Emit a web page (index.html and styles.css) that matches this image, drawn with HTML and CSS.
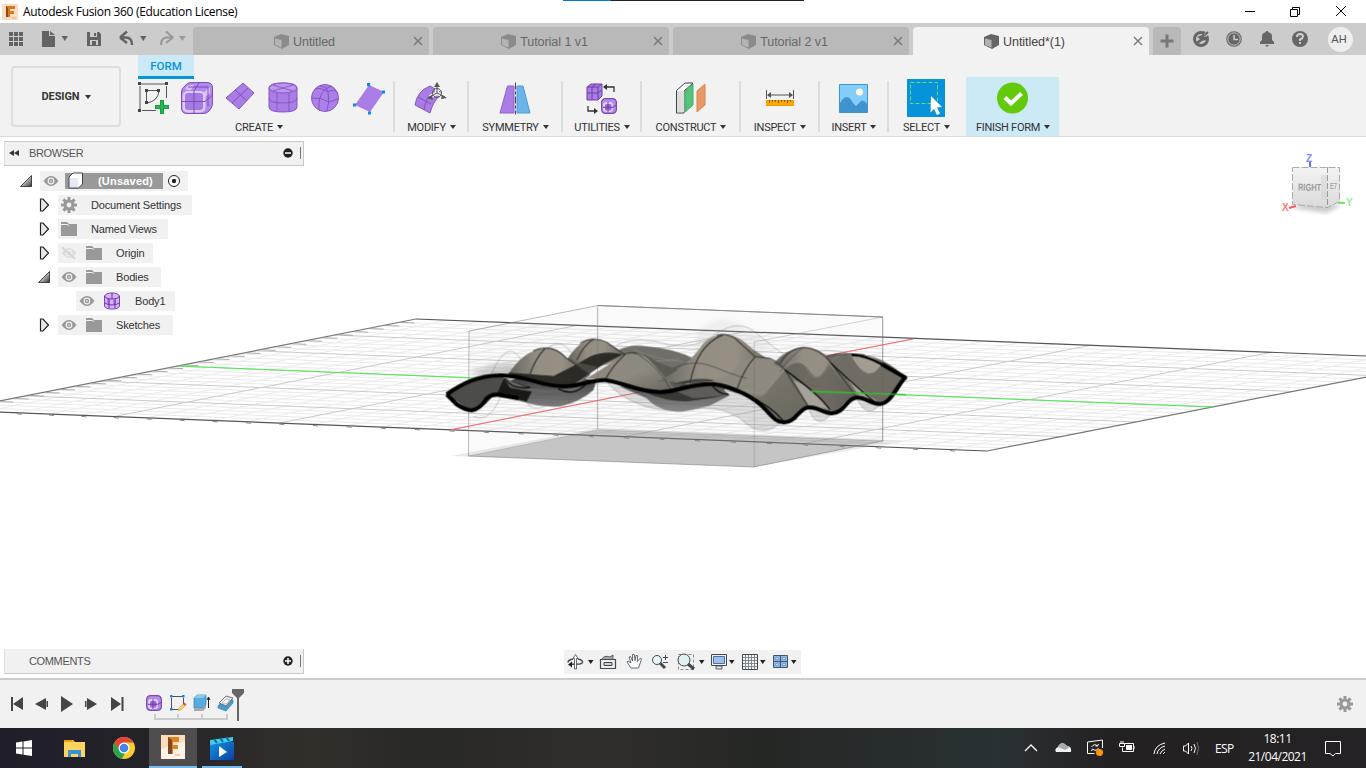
FILE: index.html
```html
<!DOCTYPE html>
<html lang="en">
<head>
<meta charset="utf-8">
<title>Autodesk Fusion 360 (Education License)</title>
<link rel="stylesheet" href="styles.css">
</head>
<body>
<svg class="defs" width="0" height="0">
  <defs>
    <linearGradient id="gTri" x1="0" y1="0" x2="1" y2="1"><stop offset=".3" stop-color="#eee"/><stop offset="1" stop-color="#333"/></linearGradient>
    <linearGradient id="gClay" x1="0" y1="0" x2="1" y2="1"><stop offset="0" stop-color="#8d887d"/><stop offset=".5" stop-color="#8f8a7f"/><stop offset="1" stop-color="#625f58"/></linearGradient>
    <linearGradient id="gHill" x1="0" y1="0" x2="1" y2="0"><stop offset="0" stop-color="#66635d"/><stop offset=".35" stop-color="#938d82"/><stop offset=".65" stop-color="#969085"/><stop offset="1" stop-color="#6b6861"/></linearGradient>
    <linearGradient id="gUnder" x1="0" y1="0" x2="0" y2="1"><stop offset="0" stop-color="#222"/><stop offset="1" stop-color="#6f6f6f"/></linearGradient>
    <linearGradient id="gCube" x1="0" y1="0" x2="0" y2="1"><stop offset="0" stop-color="#f3f3f3"/><stop offset="1" stop-color="#dadada"/></linearGradient>
    <linearGradient id="gPlay" x1="0" y1="0" x2="1" y2="1"><stop offset="0" stop-color="#1593df"/><stop offset="1" stop-color="#0b3fa5"/></linearGradient>
    <filter id="soft" x="-20%" y="-30%" width="140%" height="160%"><feGaussianBlur stdDeviation="8"/></filter>
    <filter id="soft2"><feGaussianBlur stdDeviation="2"/></filter>
  </defs>
  <symbol id="cube" viewBox="0 0 18 18"><path d="M1 4 8 1l8 2v9l-7 4-8-4z" fill="#666"/><path d="M2 5.500 8.500 7v7.800L2 11.800z" fill="#b0b0b0"/></symbol>
  <symbol id="x" viewBox="0 0 10 10"><path d="m1 1 8 8M9 1 1 9" stroke="#777" stroke-width="1.400" fill="none"/></symbol>
  <symbol id="down" viewBox="0 0 6 4"><path d="M0 0h6L3 4z" fill="currentColor"/></symbol>
  <symbol id="closed" viewBox="0 0 12 16"><path d="M2.500 2v12H5l5.500-6L5 2z" fill="#e8e8e8" stroke="#222" stroke-width="1.200"/></symbol>
  <symbol id="open" viewBox="0 0 12 12"><path d="M11.500.5v11H.5z" fill="url(#gTri)" stroke="#222" stroke-width=".8"/></symbol>
  <symbol id="eye" viewBox="0 0 16 12"><path d="M.5 6Q8-4 15.500 6 8 16 .5 6" fill="#999"/><circle cx="8" cy="6" r="3.400" fill="#f1f1f1"/><circle cx="8" cy="6" r="2.200" fill="#999"/><circle cx="8" cy="6" r=".8" fill="#fff"/></symbol>
  <symbol id="folder" viewBox="0 0 16 14"><path d="M0 0h6l2 2h8v12H0z" fill="#999"/><path d="M0 2.500h6.500L8 3.600" stroke="#f1f1f1" fill="none"/></symbol>
  <symbol id="gear" viewBox="0 0 16 16"><path d="M8 0v16M0 8h16M2.400 2.400l11.200 11.200M13.600 2.400 2.400 13.600" stroke="#999" stroke-width="3"/><circle cx="8" cy="8" r="5.500" fill="#999"/><circle cx="8" cy="8" r="2.400" fill="#f1f1f1"/></symbol>
  <symbol id="rbox" viewBox="0 0 32 32"><path d="M4 4Q6 .5 10 .5H26Q31.500.5 31.500 6V22Q31 26 28 29 26 31.500 22 31.500H6Q.5 31.500.5 26V10Q.5 6 4 4z" fill="#b388ee" stroke="#7b50b8"/><path d="M4 7Q6 3 10 3h3l-3 5H6zM23 10l6-5v6l-6 5z" fill="#d9c0f8"/><rect x="1.500" y="9" width="23" height="21.500" rx="5" fill="#dfc9fa"/><rect x="4" y="11" width="18" height="17" rx="3" fill="#a779e4"/><path d="M1 19.500h23l7-6M13 31V9l5-8M7 5h20v19" stroke="#7548ad" stroke-width=".9" fill="none"/></symbol>
  <symbol id="rboxs" viewBox="0 0 16 16"><rect x=".6" y=".6" width="14.800" height="14.800" rx="4" fill="#b48aec" stroke="#7b4cb8" stroke-width="1.200"/><rect x="2" y="4" width="10" height="10" rx="3" fill="#e3d0fb"/><rect x="4" y="6" width="6.500" height="6.500" rx="1.500" fill="#9a68d8"/><path d="M7 4v10M2 9.300h10l3-2" stroke="#6c3fa5" fill="none"/></symbol>
</svg>

<div class="app">
  <header class="titlebar">
    <svg width="16" height="16" viewBox="0 0 16 16"><path d="M0 0h16v16H0z" fill="#fbdcc3"/><path d="M4 2h9v3H8v2h4v3H8v3H4z" fill="#d87a1d"/><path d="M4 2 6 4v9H4z" fill="#8c4a14"/><path d="M10 14h4" stroke="#f0a76a"/></svg>
    <span class="title">Autodesk Fusion 360 (Education License)</span>
    <svg class="winbtns" width="101" height="12" viewBox="0 0 101 12" fill="none" stroke="#000"><path d="M0 5.500h10"/><path d="M45.500 3.500h7v7h-7zM47.500 3V1.500h7v7H53"/><path d="m91 0 10 10M101 0 91 10"/></svg>
    <i class="topline"></i>
  </header>

  <nav class="tabbar">
    <div class="quick">
      <svg width="193" height="32" viewBox="0 0 193 32" fill="#636363"><path d="M9 9h4v4H9zm5 0h4v4h-4zm5 0h4v4h-4zM9 14h4v4H9zm5 0h4v4h-4zm5 0h4v4h-4zM9 19h4v4H9zm5 0h4v4h-4zm5 0h4v4h-4z"/><path d="M42 8h7v5h6v11H42zM50 8l5 4h-5z"/><path d="M61.500 13h6.500l-3.200 5z"/><path d="M87 9h12l2 2v12H87z"/><path d="M90 9h7v5h-7zM90 17h8v5h-8z" fill="#ccc"/><path d="M94 10h2v3h-2zM92 18h4v4h-4z"/><path d="m120 14.500 7-6M120 14.500l7 5.500M121 14.500h5q6 0 6 7.500" fill="none" stroke="#636363" stroke-width="2.400"/><path d="M140 13h6.500l-3.200 5z"/><g fill="#999"><path d="m173 14.500-7-6M173 14.500l-7 5.500M172 14.500h-5q-6 0-6 7.500" fill="none" stroke="#999" stroke-width="2.200"/><path d="M179 13h6.500l-3.200 5z"/></g></svg>
    </div>
    <div class="tab dim"><svg class="cube"><use href="#cube"/></svg><span>Untitled</span><svg class="close"><use href="#x"/></svg></div>
    <div class="tab dim"><svg class="cube"><use href="#cube"/></svg><span>Tutorial 1 v1</span><svg class="close"><use href="#x"/></svg></div>
    <div class="tab dim"><svg class="cube"><use href="#cube"/></svg><span>Tutorial 2 v1</span><svg class="close"><use href="#x"/></svg></div>
    <div class="tab active"><svg class="cube"><use href="#cube"/></svg><span>Untitled*(1)</span><svg class="close"><use href="#x"/></svg></div>
    <div class="plus"><svg width="14" height="14"><path d="M7 .5v13M.5 7h13" stroke="#777" stroke-width="3"/></svg></div>
    <svg class="status" width="130" height="32" viewBox="0 0 130 32" fill="#666"><circle cx="12" cy="16" r="6.500" fill="none" stroke="#666" stroke-width="3"/><path d="m6 20 5-4-3-2 5-2 2-4 3 3-3 3 4-1-2 4-4 1-5 4z"/><path d="m15 11 4-4 2 3-4 4z" fill="#ccc"/><path d="m16 12 3-3" stroke="#666" stroke-width="2"/><circle cx="45" cy="16" r="7.800"/><circle cx="45" cy="16" r="6.200" fill="none" stroke="#ccc" stroke-width=".9"/><path d="M45 12v4.500h4" stroke="#ccc" stroke-width="1.500" fill="none"/><path d="M71 21v-2l2-2v-4q0-3 4-4V8h2v1q4 1 4 4v4l2 2v2zM76 22h4l-2 2z"/><circle cx="111" cy="16" r="8"/><path d="M108 14q0-3 3-3 3 .2 3 2.500 0 1.500-3 3v1.500M111 19v2" stroke="#ccc" stroke-width="2" fill="none"/></svg>
    <div class="avatar">AH</div>
  </nav>

  <section class="ribbon">
    <div class="design"><b>DESIGN</b><svg class="dn"><use href="#down"/></svg></div>
    <div class="create">
      <div class="formtab">FORM</div>
      <div class="createicons">
        <svg width="36" height="34" viewBox="0 0 36 34"><path d="M4 3h26M3 5v24M29.500 5v12M5 29.500h14" stroke="#555" fill="none"/><path d="M10 9.500h11M9.500 11v9M22 10q-1 10-12 12" stroke="#555" fill="none"/><path d="M1 1h3v3H1zM28 1h3v3h-3zM1 28h3v3H1zM8 8h3v3H8zM20 8h3v3h-3zM8 20h3v3H8z" fill="#444"/><path d="M18 26h14M25 19v14" stroke="#1a9e44" stroke-width="4"/><path d="M19 26h12M25 20v12" stroke="#27b555" stroke-width="2"/></svg>
        <svg width="32" height="32"><use href="#rbox"/></svg>
        <svg width="30" height="32" viewBox="0 0 30 32"><path d="M18 1 29 11 14 27 1 16z" fill="#a97ce6" stroke="#8658c4"/><path d="m10 8 12 11M23 6 7 21" stroke="#7f52bb"/></svg>
        <svg width="30" height="32" viewBox="0 0 30 32"><path d="M1 6v19q0 5 14 5t14-5V6q0-5-14-5T1 6z" fill="#a97ce6" stroke="#8658c4"/><ellipse cx="15" cy="6" rx="14" ry="5" fill="#bd96f0" stroke="#8658c4"/><path d="M1 16q0 5 14 5t14-5M9 11v19M21 11v19M5 3l20 6M25 3 5 9" stroke="#7f52bb" fill="none" stroke-width=".8"/></svg>
        <svg width="30" height="32" viewBox="0 0 30 32"><circle cx="14" cy="16" r="13.500" fill="#ad80e9" stroke="#8658c4"/><path d="M4 7q6-2 13 3 6-4 10 1M17 10q2 9-1 19M1 16q9-1 17 4l9-3M9 4q8 1 8 6M21 4q-6 2-8 4-6 7-5 20" stroke="#7f52bb" fill="none" stroke-width=".9"/></svg>
        <svg width="34" height="34" viewBox="0 0 34 34"><path d="M15 3 30 10 16 30 1 23z" fill="#a97ce6"/><path d="M13 1h3.200v3.200H13zM28 8.500h3v3h-3zM14 29.500h3v3h-3zM-1 21.500h3v3h-3z" fill="#0b8be8"/></svg>
      </div>
      <div class="label createlabel">CREATE<svg class="dn"><use href="#down"/></svg></div>
    </div>
    <div class="group">
      <svg width="34" height="36" viewBox="0 0 34 36"><path d="M1 24Q3 10 16 5l12 7q-9 8-12 20z" fill="#a97ce6" stroke="#8658c4"/><path d="m4 16 13 7M10 29q1-13 12-19" stroke="#7f52bb" fill="none"/><path d="M23 3v9m0 0-7 4m7-4 8 4" stroke="#f1f1f1" stroke-width="4"/><circle cx="23" cy="12" r="4.500" fill="none" stroke="#555"/><path d="M23 3v9m0 0-7 4m7-4 8 4" stroke="#555" fill="none"/><path d="m23 1-3 5h6zM13 17l5-3 1 5zM33 17l-5-3-1 4z" fill="#555"/></svg>
      <div class="label">MODIFY<svg class="dn"><use href="#down"/></svg></div></div>
    <div class="group">
      <svg width="34" height="36" viewBox="0 0 34 36"><path d="M9.500 5H16v27H2z" fill="#a97ce6" stroke="#915fd0"/><path d="M19 5h6l7 27H19z" fill="#6bb3e8" stroke="#4d9bd6"/><path d="M17.500 1.500v32" stroke="#444" stroke-dasharray="7 2 3 2"/></svg>
      <div class="label">SYMMETRY<svg class="dn"><use href="#down"/></svg></div></div>
    <div class="group">
      <svg width="34" height="36" viewBox="0 0 34 36"><path d="m2 6 4-3h11v12l-4 4H2z" fill="#a97ce6" stroke="#6c3fa5"/><path d="M2 6h11v12M2 12h11l4-3M7 19V6l4-3M13 6l4-3" stroke="#6c3fa5" fill="none"/><svg x="16" y="17" width="16" height="16"><use href="#rboxs"/></svg><path d="M29 11V6h-8M3 25v5h8" stroke="#333" stroke-width="1.300" fill="none"/><path d="m18 6 4-3v6zM13 30l-4-3v6z" fill="#333"/></svg>
      <div class="label">UTILITIES<svg class="dn"><use href="#down"/></svg></div></div>
    <div class="group">
      <svg width="34" height="36" viewBox="0 0 34 36"><path d="M2.500 9.500 11 2h8l-9 8v22H2.500z" fill="#fff" stroke="#444"/><path d="M3 10h7v21H3z" fill="#ddd"/><path d="m11 10 8-7v21l-8 7z" fill="#55c47a" stroke="#3cad62"/><path d="m23 10 8-7v21l-8 7z" fill="#e79864" stroke="#d88550"/></svg>
      <div class="label">CONSTRUCT<svg class="dn"><use href="#down"/></svg></div></div>
    <div class="group">
      <svg width="34" height="36" viewBox="0 0 34 36"><path d="M3.500 9v9M30.500 9v9M5 14h24" stroke="#555"/><path d="m4 14 4-3v6zM30 14l-4-3v6z" fill="#555"/><path d="M3.500 19.500h27v5h-27z" fill="#fba900" stroke="#f09c00"/><path d="M6.500 19v3m3-3v2m3-2v2m3-2v3m3-3v2m3-2v2m3-2v3m3-3v2" stroke="#7a5200" stroke-width=".9"/></svg>
      <div class="label">INSPECT<svg class="dn"><use href="#down"/></svg></div></div>
    <div class="group">
      <svg width="34" height="36" viewBox="0 0 34 36"><path d="M2.500 3.500h28v28h-28z" fill="#83cdfd" stroke="#3f93ce"/><path d="M3 22q7-12 13 0l3 3 5-5q3-2 6 3v8H3z" fill="#3f93ce"/><circle cx="22.500" cy="11" r="3.500" fill="#fffbd5"/></svg>
      <div class="label">INSERT<svg class="dn"><use href="#down"/></svg></div></div>
    <div class="group select">
      <svg width="38" height="38" viewBox="0 0 38 38"><path d="M0 0h38v38H0z" fill="#0793da"/><path d="M3.500 3.500h27v21h-27z" fill="none" stroke="#69db7b" stroke-dasharray="4 2"/><path d="m24 17 11 11-5 .5 3 6-3 1.500-3-6-3.500 3.500z" fill="#fff"/></svg>
      <div class="label">SELECT<svg class="dn"><use href="#down"/></svg></div></div>
    <div class="group finish">
      <svg width="34" height="36" viewBox="0 0 34 36"><circle cx="16.500" cy="17" r="15.500" fill="#62ca0a"/><path d="m9 16.500 6 6L25.500 12.500" stroke="#fff" stroke-width="4" fill="none"/></svg>
      <div class="label">FINISH FORM<svg class="dn"><use href="#down"/></svg></div></div>
  </section>

  <main class="viewport">
    <svg class="scene" width="1366" height="541" viewBox="0 137 1366 541">
      <g id="grid"></g>
      <path d="M451 456 598 428 903 441 754 467z" fill="#777" opacity=".16"/>
      <path d="M469 456 598 430 883 441 754 467z" fill="#777" opacity=".3"/>
      <g fill="#bbb" fill-opacity=".08" stroke="#777" stroke-opacity=".5"><path d="M469 331 598 305.500 882.500 317v124l-129 26-285-11z"/><path d="M597.500 305v125L469 456M598 430l285 11M883 317l-129 25" fill="none" stroke-opacity=".3"/></g>
      <path d="M598 305.500 883 317" stroke="#888" fill="none"/>
      <path d="M178 366 500 379M830 392l382 15" stroke="#49ee49"/><path d="M450 430 640 392M825 356l88-17" stroke="#fa6a6a"/>

      <!-- Clay form; one unit is a third of a pixel -->
      <g transform="translate(430 295) scale(.33333)" fill="none" stroke-linejoin="round">
        <g filter="url(#soft)">
          <path d="M120 235Q190 200 260 205L240 265Z" fill="#777" opacity=".35"/>
          <path d="M800 115Q870 40 950 100L1030 150 920 220 790 180Z" fill="#999" opacity=".12"/>
        </g>
        <path d="M130 365Q175 385 210 310T300 335Q350 360 430 250M185 235Q235 120 280 205T340 180Q380 110 430 180M560 150Q620 120 720 150 800 165 860 115 930 70 980 115T1080 190M1110 180Q1190 150 1290 185" stroke="#777" stroke-width="3" opacity=".4"/>
        <path d="M525 255Q570 310 640 332 690 350 780 345 860 325 930 370 1000 440 1060 375L1135 340Q1160 410 1205 355L1280 310Q1310 375 1350 328L1290 280 900 250Z" fill="#999" fill-opacity=".3" stroke="#888" stroke-opacity=".5" stroke-width="3"/>
        <path d="M205 270 260 315Q340 340 395 333 450 320 490 285L500 255 300 235Z" fill="url(#gUnder)" fill-opacity=".9"/>
        <path d="M570 275 650 310Q690 353 760 350L840 332 900 300 850 262 690 275Z" fill="url(#gUnder)" fill-opacity=".75"/>
        <path d="M640 290Q720 325 780 318 850 310 880 302L840 262 690 275Z" fill="#2e2e2c" fill-opacity=".85"/>
        <path d="M740 290Q780 265 850 267L885 275 880 302 790 310Z" fill="#5d5c58"/>
        <path d="M50 298Q130 240 215 240L230 260 260 310Q210 295 190 300 160 345 118 346Z" fill="#4c4c48"/>
        <path d="M222 250 310 280 290 320 200 298Z" fill="#191918"/>
        <path d="M220 248Q330 300 400 282L460 275 430 290Q330 300 240 278Z" fill="#656562"/>

        <path d="M560 168Q600 145 650 154 730 160 790 190L900 215 860 255 690 240Z" fill="#716e67"/>
        <path d="M585 170Q660 215 750 190M610 162Q680 195 760 200" stroke="#aaa" stroke-width="2" opacity=".5"/>
        <path d="M410 195Q450 132 490 132 535 135 585 180L540 205 430 240Z" fill="url(#gHill)"/>
        <path d="M233 240Q280 165 345 160 375 155 410 190L480 240 435 278Q330 280 233 240Z" fill="url(#gHill)"/>
        <path d="M233 233Q330 240 370 243 430 215 480 185 525 165 578 178L520 208 465 245 420 275 340 272 270 250Z" fill="#24241f" fill-opacity=".92"/>
        <path d="M410 186Q440 215 478 240L500 215 455 205Z" fill="#5c5953" fill-opacity=".6"/>
        <path d="M470 250Q530 215 580 178 630 165 680 210L765 290 690 293 520 255Z" fill="url(#gClay)"/>
        <path d="M640 175Q715 230 830 235L770 265 735 280Z" fill="#57544d" opacity=".8"/>
        <path d="M680 260Q770 220 820 145 850 115 890 118 925 120 965 160L1040 210 1040 285 920 280 840 260Z" fill="url(#gHill)"/>
        <path d="M730 267Q800 245 850 255L930 275 975 300 920 295 835 266Z" fill="#242421" opacity=".7"/>
        <path d="M820 262Q900 255 930 205 965 178 1000 187 1040 195 1065 225L1145 340Q1115 335 1100 372 1060 400 1020 350 950 280 850 267Z" fill="url(#gClay)"/>
        <path d="M1030 205Q1070 160 1120 157 1165 155 1205 195L1280 308Q1240 315 1225 350 1200 365 1180 340L1135 335 1065 225Z" fill="url(#gHill)"/>
        <path d="M1185 185Q1240 170 1305 180 1370 190 1428 248 1390 325 1350 328L1280 305 1230 245Z" fill="#716c63"/>
        <path d="M930 275Q990 330 1015 285L1065 225 1130 300 1144 338Q1115 340 1100 368 1070 395 1040 370Z" fill="#6d695f" opacity=".7"/>
        <path d="M1065 225Q1110 180 1140 230 1165 270 1195 205L1275 305Q1245 315 1230 345 1205 370 1180 340Z" fill="#5f5b53" opacity=".72"/>
        <path d="M1265 185Q1290 230 1315 235 1340 235 1355 205L1320 182Z" fill="#a39c90"/>
        <path d="M1090 255Q1150 275 1205 350L1180 338 1135 330ZM1245 240Q1290 280 1350 326L1290 307Z" fill="#a5a29c"/>

        <path d="M295 250Q315 190 345 160M440 195Q465 145 490 133M525 255Q545 215 585 178M780 265Q800 150 880 119M922 280Q940 225 975 185" stroke="#292927" stroke-width="3.500" opacity=".85"/>
        <path d="M620 175Q690 220 725 288M730 220Q790 190 850 215T950 250M1050 230Q1080 185 1120 157" stroke="#292927" stroke-width="3" opacity=".5"/>
        <path d="M345 160Q375 155 410 190L478 238M310 168Q330 158 345 160M450 145Q490 122 530 142L585 180M580 178Q600 170 620 175M860 122Q885 112 915 130L975 185 1020 190Q1050 205 1065 225L1135 335M1050 205Q1080 155 1130 158 1180 165 1215 220L1278 304M1190 185Q1230 170 1305 180" stroke="#33322f" stroke-width="4" opacity=".8"/>
        <path d="M1065 225Q1170 300 1200 345M1200 202Q1245 245 1340 326M225 250Q245 285 300 277M385 282Q430 305 465 270M950 300Q1020 330 1060 378M845 270Q865 298 895 298" stroke="#111" stroke-width="4"/>
        <path d="M870 275Q910 295 955 285 1010 315 1040 235 1110 165 1135 230 1165 275 1200 205 1250 145 1280 205 1315 265 1355 207" stroke="#aaa" stroke-width="2" opacity=".45"/>
        <path d="M50 298C90 270 140 240 215 241S330 274 400 274C450 275 485 253 525 255S625 292 690 291C750 290 780 265 850 267 920 275 980 315 1005 342S1040 382 1060 382C1095 385 1110 337 1135 337 1165 335 1180 355 1205 355 1245 355 1250 308 1280 308 1305 305 1320 327 1350 327 1385 325 1400 270 1426 248L1355 207M50 298 80 328Q105 345 125 346 150 343 170 310 190 293 215 301L265 310" stroke="#000" stroke-width="12"/>
        <path d="M1360 210Q1305 180 1265 180" stroke="#000" stroke-width="7"/>
        <path d="M117 36v0M503 36v365M1359 66v375M973 140v378" stroke="#555" stroke-width="3" opacity=".25"/>
        <path d="M1140 289 1428 299" stroke="#28c928" stroke-width="4"/>
      </g>

      <!-- View cube -->
      <path d="m1290 208 20-6 32 3-15 8z" fill="#999" opacity=".5" filter="url(#soft2)"/>
      <path d="M1310 162v5" stroke="#6668ff" stroke-width="2"/><path d="m1289 208 7-2" stroke="#f55" stroke-width="2"/><path d="M1338 203h7" stroke="#6de66d" stroke-width="2"/>
      <path d="M1292.500 167.500h47v34l-12 6-35-3z" fill="url(#gCube)" stroke="#aaa" stroke-dasharray="7 2"/><path d="M1327.500 167v41" stroke="#999" stroke-dasharray="6 2"/><path d="M1321 175h6v25h-6z" fill="#ccc" opacity=".4"/>
      <g font-family="Liberation Sans, sans-serif" font-weight="bold"><text x="1298" y="190.500" font-size="10" textLength="23" lengthAdjust="spacingAndGlyphs" fill="#999" transform="rotate(1 1298 191)">RIGHT</text><text x="1330" y="189" font-size="9" fill="#aaa" textLength="7" lengthAdjust="spacingAndGlyphs">E7</text><text x="1306" y="162" font-size="10" fill="#8484ff">Z</text><text x="1282" y="211" font-size="10" fill="#ff7777">X</text><text x="1346" y="206" font-size="10" fill="#8df08d">Y</text></g>
    </svg>

    <aside class="browser">
      <div class="panelhead"><svg width="12" height="8"><path d="M5 1v6L0 4zM10 1v6L5 4z" fill="#333"/></svg><span>BROWSER</span><svg class="knob" width="18" height="12"><circle cx="5" cy="6" r="4.700" fill="#222"/><path d="M2 6h6" stroke="#fff" stroke-width="1.500"/><path d="M17.500 0v12" stroke="#777"/></svg></div>
      <div class="row r0"><svg class="arr op"><use href="#open"/></svg><div class="item" style="width:148px"><svg class="eye"><use href="#eye"/></svg><span class="unsaved"><svg width="18" height="18" viewBox="0 0 18 18"><path d="m2 5 4-4h9.500v11l-4 4H2z" fill="#fff" stroke="#444"/><path d="M3 6h8v9H3z" fill="#e4eaf4"/></svg><b>(Unsaved)</b></span><svg class="radio" width="14" height="14"><circle cx="7" cy="7" r="5.500" fill="#fff" stroke="#222"/><circle cx="7" cy="7" r="2.200" fill="#222"/></svg></div></div>
      <div class="row"><svg class="arr"><use href="#closed"/></svg><div class="item" style="width:134px"><svg class="gear"><use href="#gear"/></svg><span>Document Settings</span></div></div>
      <div class="row"><svg class="arr"><use href="#closed"/></svg><div class="item" style="width:110px"><svg class="folder"><use href="#folder"/></svg><span>Named Views</span></div></div>
      <div class="row"><svg class="arr"><use href="#closed"/></svg><div class="item" style="width:95px"><svg class="eye hid" viewBox="0 0 16 12"><use href="#eye"/><path d="m1 0 13 12" stroke="#777" stroke-width="2"/></svg><svg class="folder second"><use href="#folder"/></svg><span>Origin</span></div></div>
      <div class="row"><svg class="arr op"><use href="#open"/></svg><div class="item" style="width:103px"><svg class="eye"><use href="#eye"/></svg><svg class="folder second"><use href="#folder"/></svg><span>Bodies</span></div></div>
      <div class="row child"><div class="item" style="width:99px"><svg class="eye"><use href="#eye"/></svg><svg class="bodyicon" width="18" height="18" viewBox="0 0 18 18"><path d="M1.500 4v10q1 3 7.500 3t7.500-3V4Q15 1 9 1T1.500 4z" fill="#d5b3f7" stroke="#7b3fb5"/><path d="M4 7h3v5H4zM10 8h3v5h-3z" fill="#b67bee"/><path d="M1.500 4Q3 7 9 7t7.500-3M2 11q2 2 7 2t7-2M6 7v9m6-9v9M9 1v6" stroke="#6d32a5" fill="none"/></svg><span>Body1</span></div></div>
      <div class="row"><svg class="arr"><use href="#closed"/></svg><div class="item" style="width:115px"><svg class="eye"><use href="#eye"/></svg><svg class="folder second"><use href="#folder"/></svg><span>Sketches</span></div></div>
    </aside>

    <div class="panelhead comments"><span>COMMENTS</span><svg class="knob" width="18" height="12"><circle cx="5" cy="6" r="4.700" fill="#222"/><path d="M2 6h6M5 3v6" stroke="#fff" stroke-width="1.500"/><path d="M17.500 0v12" stroke="#777"/></svg></div>

    <div class="navbar">
      <svg width="236" height="24" viewBox="0 0 236 24" fill="none" stroke="#414952"><path d="M14 9q5 1 4.500 3.500-1 2.500-12 1.500M9 9q-5 1-5 3.500" stroke-width="1.500"/><path d="M10.500 19V8.500H9l2.500-4L14 8.500h-1.500V19z" fill="#fff" stroke-width=".8"/><path d="m4 14.500 4-3v6z" fill="#222" stroke="none"/><path d="M36.500 9.500h15v9h-15z" fill="#eee" stroke-width="1.200"/><path d="M38 9q2-4 8-2l3-2v4" fill="#aaa" stroke-width=".8"/><path d="M40 12.500h8v3h-8z" fill="#ccd"/><path d="m66 18-4-6 1-1 3 2-2-6 1.500-.5 2 4.500V4.500h1.800l.7 6 1-5h1.600l-.3 6L75.500 8l1 1-3 9z" fill="#fff" transform="translate(1)" stroke-width=".8"/><circle cx="93" cy="10" r="4.500" fill="#e8f4f7"/><path d="m96 13 5 5" stroke-width="3"/><path d="M99 7.500h5M101.500 5v5M99 12.500h5"/><path d="M114.500 4.500h15v15h-15z" stroke-dasharray="3 2" stroke="#888"/><circle cx="120" cy="10" r="6" fill="#e0f0f1"/><path d="m124 14 6 5" stroke-width="3"/><path d="M147.500 4.500h15v11h-15z" fill="#eee"/><path d="M149.500 6.500h11v7h-11z" fill="#9dbfea" stroke="#4872a6"/><path d="M152 16h6v3h-6z" fill="#ddd" stroke-width=".8"/><path d="M178.500 4.500h15v15h-15z" fill="#f4f4f4"/><path d="M181.500 5v14m3-14v14m3-14v14m3-14v14M179 7.500h14m-14 3h14m-14 3h14m-14 3h14" stroke="#818990"/><path d="M209.500 5.500h7v6h-7zm7 0h7v6h-7zm-7 6h7v6h-7zm7 0h7v6h-7z" fill="#93b9e5" stroke="#38557a"/><path d="M211.500 7.500h3v2h-3zm7 0h3v2h-3zm-7 6h3v2h-3zm7 0h3v2h-3z" fill="#c7dcf1" stroke="#5a85b9" stroke-width=".6"/><g fill="#222" stroke="none"><path d="M24 10h5.500l-2.750 4zM135 10h5.500l-2.750 4zM165 10h5.500l-2.750 4zM196 10h5.500l-2.750 4zM227 10h5.500l-2.750 4z"/></g></svg>
    </div>
  </main>

  <section class="timeline">
    <svg width="250" height="48" viewBox="0 680 250 48"><g fill="#444"><path d="M11 697h2v14h-2zM23 697v13l-10-6zM46 698v12l-11-6zM46.500 701h1.500v6h-1.500zM61 696v16l12-8zM85 701h1.500v6H85zM87 698v12l10-6zM111 697v14l10-7zM121.500 697h2v14h-2z"/></g>
      <svg x="146" y="695" width="16" height="16"><use href="#rboxs"/></svg>
      <path d="M172 696.500h12M171.500 698v10M183.500 698v6M172 709.500h7" stroke="#555"/><path d="M170 695h2.500v2.500H170zM182 695h2.500v2.500H182zM170 708h2.500v2.500H170z" fill="#1688df"/><path d="m178 711 1-3 4-4 2 2-4 4z" fill="#f5cc67" stroke="#d9a64e" stroke-width=".6"/><path d="m183 704 1.500-1.500 2 2L185 706z" fill="#e44"/>
      <path d="m194 698 3-3h9v10l-3 3h-9z" fill="#57abdf" stroke="#357da9" stroke-width=".7"/><path d="m194 698 3-3h9l-3 3z" fill="#8bcaee"/><path d="M194 708h9l3-3v3l-3 3h-9z" fill="#aaa"/><path d="M208.500 708v-10m-1.500 2 1.500-3 1.500 3" stroke="#222" fill="none"/>
      <path d="m218 706 8-8 7 2v3l-7 8-8-3z" fill="#459ad0" stroke="#3a86b6" stroke-width=".7"/><path d="m219 703 7-7 7 2-7 8z" fill="#eee" stroke="#666" stroke-width=".9"/><path d="m222 703 4-4 4 1-4 4z" fill="#fff" stroke="#999" stroke-width=".6"/>
      <path d="M155 714v5h72v-5M178 714v5M202 714v5" fill="none" stroke="#ccc" stroke-width="2"/><path d="M232 689h12v4l-5 5v23h-2v-23l-5-5z" fill="#666"/></svg>
    <svg class="tgear"><use href="#gear"/></svg>
  </section>

  <footer class="taskbar">
    <div class="task start"><svg width="16" height="16" fill="#fff"><path d="M0 2.500 6.500 1.500v6H0zM7.500 1.400 16 0v7.500H7.500zM0 8.500h6.500v6L0 13.500zM7.500 8.500H16V16l-8.500-1.300z"/></svg></div>
    <div class="task folder-task"><svg width="22" height="19"><path d="M0 1h9l2 2h10v15H0z" fill="#ffd45e"/><path d="M0 1h8l2 2H0z" fill="#e9a300"/><path d="M4 18v-7h13v7h-3v-3H7v3z" fill="#3593d6"/></svg></div>
    <div class="task chrome"><svg width="22" height="22" viewBox="0 0 22 22"><circle cx="11" cy="11" r="11" fill="#f9ce2d"/><path d="M11 11 6 14 1.500 5.500A11 11 0 0 1 20.500 5.500H11z" fill="#e44335"/><path d="M1.500 5.500 7 14l5 2-3 5.800A11 11 0 0 1 1.500 5.500z" fill="#2ba24c"/><circle cx="11" cy="11" r="5.500" fill="#fff"/><circle cx="11" cy="11" r="4.300" fill="#4285e8"/></svg></div>
    <div class="task current"><svg width="24" height="24"><path d="M0 0h24v24H0z" fill="#fddbbb"/><path d="M0 24V14L24 6v18z" fill="#fff2e7"/><path d="M7 2h11v5h-6v3h5v4h-5v5H7z" fill="#dc8424"/><path d="m7 2 4 3v14H7z" fill="#85471a"/><path d="M14 20h5" stroke="#eea15d"/></svg></div>
    <div class="task run"><svg width="24" height="24"><path d="M0 6h24v18H0z" fill="url(#gPlay)"/><path d="m0 4 23-3v4L0 9z" fill="#45c9ee"/><path d="m4 3 3 4m3-5 3 4m3-5 3 4" stroke="#086f9e" stroke-width="2"/><path d="m9 10 8 6-8 5z" fill="#fff"/></svg></div>
    <div class="tray">
      <svg width="180" height="24" viewBox="1020 736 180 24" fill="none" stroke="#fff"><path d="m1025 751 6-6 6 6" stroke-width="1.400"/><path d="M1056 752q-2-3 2-5 4-7 9-1 5 0 4 6z" fill="#f2f2f2" stroke="none"/><path d="M1058 746q4-6 9 0l3 1-5 3-7-3z" fill="#aaa" stroke="none"/><path d="m1087.500 742 15-2v8M1087.500 742v11.500h7" /><path d="M1091.500 747q3-4 6-1l1-2m-1 2h-2m3 2q-2 4-6 1l-1 2"/><circle cx="1099.500" cy="752.500" r="3.500" fill="#ff9700" stroke="none"/><path d="M1124.500 743.500h9v8h-11v-4M1119.500 743.500h5v3h-5zM1121 741v3m2-3v3M1134 746v3"/><path d="M1126 745h6v5h-6z" fill="#fff" stroke="none"/><path d="M1154 754q1-9 11-11M1157 754q1-6 8-8M1160 754q1-3 5-5M1163 754l2-2"/><path d="M1183.500 746v5h2l3 3v-11l-3 3zM1191 746q2 2 0 5M1194 744q3 4 0 9"/><path d="M1197 742q3 6 0 13" stroke="#777"/></svg>
      <span class="esp">ESP</span>
      <span class="clock"><span>18:11</span><span>21/04/2021</span></span>
      <svg width="18" height="17" fill="none" stroke="#fff"><path d="M1.500 1.500h15v12h-5L9 16l-3-2.500H1.500z"/></svg>
    </div>
  </footer>
</div>
<script src="grid.js"></script>
</body>
</html>
```

FILE: styles.css
```css
* { box-sizing: border-box; }
body { margin: 0; font: 11px "Liberation Sans", Arial, sans-serif; color: #333; background: #fff; }
svg { display: block; flex: none; }
.defs { position: absolute; }
.app { width: 1366px; height: 768px; display: flex; flex-direction: column; overflow: hidden; }

.titlebar { position: relative; height: 23px; flex: none; display: flex; align-items: center; padding: 0 20px 0 2px; background: #fff; }
.title { font: 12px "Open Sans", sans-serif; letter-spacing: -.32px; color: #000; margin-left: 5px; white-space: nowrap; }
.winbtns { margin-left: auto; overflow: visible; }
.topline { position: absolute; left: 563px; top: 0; width: 241px; height: 1px; background: linear-gradient(90deg, #0078d7 48px, #222 48px); }

.tabbar { height: 32px; flex: none; display: flex; background: #ccc; align-items: flex-end; }
.quick { width: 193px; height: 32px; }
.tab { width: 236px; height: 28px; margin-right: 4px; padding: 1px 24px 0 10px; border-radius: 4px 4px 0 0; display: flex; align-items: center; justify-content: center; position: relative; font-size: 12.500px; letter-spacing: -.05px; white-space: nowrap; }
.tab.dim { background: #b9b9b9; color: #666; }
.tab.active { background: #f2f2f2; color: #444; }
.tab .cube { width: 18px; height: 18px; margin-right: 2px; }
.tab.dim .cube { opacity: .55; }
.tab .close { position: absolute; right: 6px; top: 9px; width: 10px; height: 10px; }
.plus { width: 28px; height: 28px; background: #b9b9b9; border-radius: 4px 4px 0 0; display: grid; place-items: center; }
.status { margin-left: 8px; }
.avatar { width: 25px; height: 25px; border-radius: 50%; background: #eee; margin: 0 0 3px 9px; font-size: 11px; line-height: 25px; text-align: center; text-indent: -3px; color: #555; }

.ribbon { height: 82px; flex: none; display: flex; background: #f2f2f2; border-bottom: 1px solid #dcdcdc; }
.dn { width: 6px; height: 4px; margin-left: 4px; color: #333; }
.design { width: 110px; height: 61px; margin: 11px 0 0 11px; border: 2px solid #dedede; border-radius: 4px; display: flex; align-items: center; justify-content: center; font: 11px Roboto, sans-serif; letter-spacing: -.1px; color: #333; }
.design .dn { margin-left: 5px; }
.create { width: 273px; display: flex; flex-direction: column; }
.formtab { width: 56px; height: 24px; margin-left: 17px; background: #cce9f7; border-bottom: 3px solid #0696d7; color: #0696d7; font: 500 11.500px/22px Roboto, sans-serif; text-align: center; }
.createicons { height: 40px; display: flex; gap: 13px; padding: 3px 0 0 15px; }
.createicons svg { overflow: visible; }
.createicons svg:first-child { margin: -1px -5px 0 1px; }
.createicons svg:nth-child(2) { margin: 0 -1px 0 0; }
.label { display: flex; align-items: center; justify-content: center; height: 16px; font: 11px Roboto, sans-serif; letter-spacing: -.26px; color: #333; white-space: nowrap; }
.label .dn { margin-left: 4px; }
.createlabel { padding-left: 3px; }
.group { position: relative; height: 81px; padding-top: 25px; display: flex; flex-direction: column; align-items: center; }
.group:nth-of-type(3) { width: 74px; }
.group:nth-of-type(4) { width: 94px; }
.group:nth-of-type(5) { width: 79px; }
.group:nth-of-type(6) { width: 99px; }
.group:nth-of-type(7) { width: 79px; }
.group:nth-of-type(8) { width: 69px; }
.group.select { width: 76px; }
.group > svg { height: 38px; }
.group .label { margin-top: 1px; padding-left: 1px; }
.group:not(.finish)::before { content: ""; position: absolute; left: -1px; top: 26px; width: 2px; height: 51px; background: #dcdcdc; }
.group.select > svg { margin-top: -1px; }
.group.select .label { margin-top: 2px; }
.group.finish { width: 93px; margin-left: 2px; background: linear-gradient(#f2f2f2 22px, #cce9f6 22px); }

.viewport { position: relative; height: 541px; flex: none; background: #fff; }
.browser { position: absolute; left: 4px; top: 4px; width: 300px; }
.panelhead { width: 300px; height: 25px; display: flex; align-items: center; padding: 0 0 1px 4px; background: #f1f1f1; border: 1px solid #c9c9c9; border-left-color: #ddd; color: #555; font: 11px "Liberation Sans", sans-serif; }
.panelhead > span { margin-left: 8px; letter-spacing: -.35px; }
.panelhead .knob { margin: 0 2px 0 auto; }
.row { display: flex; align-items: center; height: 20px; margin: 4px 0 0 34px; }
.row.r0 { margin: 5px 0 0 16px; }
.arr { width: 12px; height: 16px; margin-right: 8px; }
.arr.op { height: 12px; }
.item { height: 20px; background: #f1f1f1; display: flex; align-items: center; padding-left: 3px; white-space: nowrap; letter-spacing: -.16px; }
.eye { width: 16px; height: 12px; }
.hid { opacity: .22; }
.folder { width: 16px; height: 14px; }
.gear { width: 16px; height: 16px; }
.second { margin-left: 9px; }
.item > span { margin-left: 14px; }
.item > .unsaved { margin-left: 6px; width: 98px; height: 16px; background: #999; color: #fff; display: flex; align-items: center; letter-spacing: .2px; }
.unsaved svg { margin: 0 13px 0 2px; }
.radio { margin-left: 4px; }
.child { margin-left: 72px; }
.bodyicon { margin-left: 8px; }
.comments { position: absolute; left: 4px; top: 512px; border-top: 0; padding: 0 0 0 16px; }
.navbar { position: absolute; left: 564px; top: 513px; width: 237px; height: 24px; background: #f1f1f1; }

.timeline { height: 50px; flex: none; border-top: 2px solid #ccc; background: #f1f1f1; display: flex; justify-content: space-between; align-items: center; padding-right: 13px; }
.tgear { width: 16px; height: 16px; }

.taskbar { height: 40px; flex: none; display: flex; background: linear-gradient(90deg, #201e27 0, #242229 140px, #322f2a 310px, #282825 420px, #302e2a 600px, #252724 760px, #293135 1000px, #242122 1110px, #242224 100%); color: #fff; }
.task { width: 49px; height: 40px; display: grid; place-items: center; }
.start { width: 48px; }
.folder-task { width: 53px; }
.chrome { width: 48px; padding-right: 2px; }
.current { width: 48px; background: #504d4e; border-bottom: 2px solid #76b9ed; }
.run { width: 50px; background: linear-gradient(#76b9ed, #76b9ed) 5px 38px / 40px 2px no-repeat; padding-bottom: 1px; }
.tray { margin-left: auto; display: flex; align-items: center; width: 346px; font: 12px "Open Sans", sans-serif; }
.esp { margin-left: 15px; width: 33px; letter-spacing: -.6px; }
.clock { width: 59px; margin-right: 17px; display: flex; flex-direction: column; align-items: center; line-height: 18px; letter-spacing: -.5px; white-space: nowrap; }
```

FILE: grid.js
```js
// Ground plane: six major cells per side, five minor cells in each
const corners = { back: [416, 319], right: [1456, 359.5], front: [987, 451], left: [-47, 410.2] };
const mix = (a, b, t) => [a[0] + (b[0] - a[0]) * t, a[1] + (b[1] - a[1]) * t];
const skew = (t, k) => t + k * t * (1 - t);
const grid = document.getElementById('grid');
function line(a, b, colour, width) {
  const el = document.createElementNS('http://www.w3.org/2000/svg', 'line');
  el.setAttribute('x1', a[0]); el.setAttribute('y1', a[1]);
  el.setAttribute('x2', b[0]); el.setAttribute('y2', b[1]);
  el.setAttribute('stroke', colour); el.setAttribute('stroke-width', width);
  grid.appendChild(el);
}
for (const major of [false, true]) {
  for (let i = 1; i < 30; i++) {
    if ((i % 5 === 0) !== major) continue;
    const u = skew(i / 30, -0.08), v = skew(i / 30, 0.07);
    const colour = major ? '#cbcbcb' : '#ebebeb';
    line(mix(corners.back, corners.right, u), mix(corners.left, corners.front, u), colour, 1);
    line(mix(corners.back, corners.left, v), mix(corners.right, corners.front, v), colour, 1);
  }
}
line(corners.back, corners.right, '#555', 1.2);
line(corners.right, corners.front, '#777', 1.2);
line(corners.front, corners.left, '#555', 1.2);
line(corners.left, corners.back, '#777', 1.2);
for (let i = 0; i < 30; i++) {
  const t = skew(i / 30, -0.08), p = mix(corners.left, corners.front, t);
  line([p[0], p[1] + 1], [p[0] + 5, p[1] + 1.6], '#888', 1);
  const q = mix(corners.left, corners.back, i / 30);
  line([q[0], q[1] + 0.5], [q[0] + 14, q[1] + 1], '#999', 0.8);
}
```
